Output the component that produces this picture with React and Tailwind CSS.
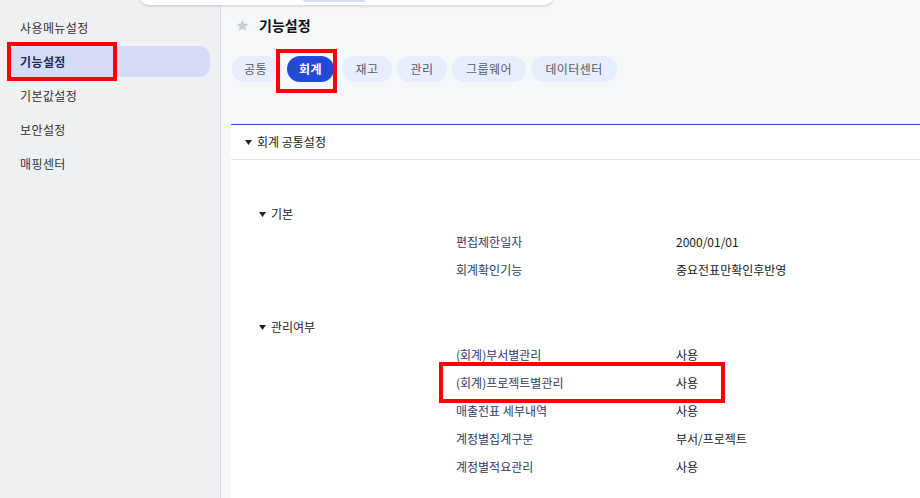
import React from 'react';

const font = { fontFamily: '"Noto Sans CJK KR", "Noto Sans", sans-serif' };

const menus = ['사용메뉴설정', '기능설정', '기본값설정', '보안설정', '매핑센터'];
const tabs = [
  { t: '공통', cls: 'w-[47px]' },
  { t: '회계', cls: 'w-[47px] ml-[8px]' },
  { t: '재고', cls: 'w-[50px] ml-[8px]' },
  { t: '관리', cls: 'w-[50px] ml-[5px]' },
  { t: '그룹웨어', cls: 'w-[74px] ml-[5px]' },
  { t: '데이터센터', cls: 'w-[86px] ml-[5px]' },
];

const Caret = ({ className = '' }) => (
  <svg width="7" height="5" viewBox="0 0 7 5" className={className}>
    <path d="M0 0h7L3.5 5z" fill="#1f2433" />
  </svg>
);

const Row = ({ label, value }) => (
  <div className="flex items-center h-[28px] pl-[225px] text-[12px]">
    <span className="w-[220px] text-[#2f3b66]">{label}</span>
    <span className="text-[#1a1a1a]">{value}</span>
  </div>
);

const Group = ({ title, className = '', children }) => (
  <div className={className}>
    <div className="flex items-center h-[20px] pl-[28px] gap-[5px] text-[12px] text-[#222]">
      <Caret />
      <span>{title}</span>
    </div>
    <div className="mt-[4px]">{children}</div>
  </div>
);

export default function App() {
  return (
    <div className="relative w-[920px] h-[498px] flex overflow-hidden bg-[#f6f7f9]" style={font}>
      {/* sidebar */}
      <aside className="w-[221px] h-full bg-[#eff0f2] border-r border-[#d8dadf] pt-[12px] flex flex-col gap-[3px]">
        {menus.map((m) => (
          <div
            key={m}
            className={
              m === '기능설정'
                ? 'ml-2 w-[202px] h-[31px] rounded-[10px] bg-[#d5dbf6] flex items-center pl-3 text-[12px] font-bold text-[#1c2a66] tracking-[0.4px]'
                : 'ml-2 h-[31px] flex items-center pl-3 text-[12px] text-[#333] tracking-[0.4px]'
            }
          >
            {m}
          </div>
        ))}
      </aside>

      {/* main */}
      <main className="flex-1 flex flex-col pl-[10px]">
        <div className="h-[50px] flex items-center pl-[5px] gap-[10px]">
          <svg width="13" height="13" viewBox="0 0 24 24">
            <path d="M12 1.5l3.2 7 7.6.8-5.7 5.1 1.6 7.5L12 18l-6.7 3.9 1.6-7.5L1.2 9.3l7.6-.8z" fill="#c9ccd3" />
          </svg>
          <span className="text-[14px] font-bold text-[#111]">기능설정</span>
        </div>

        <div className="mt-[6px] flex ml-[1px]">
          {tabs.map(({ t, cls }) => (
            <div
              key={t}
              className={`${cls} h-[26px] rounded-full text-[12px] flex items-center justify-center tracking-[0.4px] ${
                t === '회계' ? 'bg-[#2349d6] text-white font-bold' : 'bg-[#e7edfc] text-[#555b66]'
              }`}
            >
              {t}
            </div>
          ))}
        </div>

        <section className="mt-[42px] flex-1 bg-white border-t border-[#2349d6]">
          <div className="h-[35px] flex items-center gap-[5px] pl-[14px] border-b border-[#e1e3e8] text-[12px] text-[#222]">
            <Caret />
            <span>회계 공통설정</span>
          </div>

          <Group title="기본" className="mt-[44px]">
            <Row label="편집제한일자" value="2000/01/01" />
            <Row label="회계확인기능" value="중요전표만확인후반영" />
          </Group>

          <Group title="관리여부" className="mt-[33px]">
            <Row label="(회계)부서별관리" value="사용" />
            <Row label="(회계)프로젝트별관리" value="사용" />
            <Row label="매출전표 세부내역" value="사용" />
            <Row label="계정별집계구분" value="부서/프로젝트" />
            <Row label="계정별적요관리" value="사용" />
          </Group>
        </section>
      </main>

      {/* floating top card */}
      <div className="absolute left-[139px] top-[-20px] w-[415px] h-[25px] bg-white rounded-b-[10px] shadow-[0_1px_3px_rgba(0,0,0,0.18)]">
        <div className="absolute left-[164px] bottom-[3px] w-[62px] h-[4px] rounded-full bg-[#d5dbf6]" />
      </div>

      {/* annotation boxes */}
      <div className="absolute left-[7px] top-[42px] w-[110px] h-[39px] border-[4px] border-[#ff0000]" />
      <div className="absolute left-[276px] top-[49px] w-[61px] h-[44px] border-[4px] border-[#ff0000]" />
      <div className="absolute left-[439px] top-[362px] w-[286px] h-[41px] border-[4px] border-[#ff0000]" />
    </div>
  );
}
